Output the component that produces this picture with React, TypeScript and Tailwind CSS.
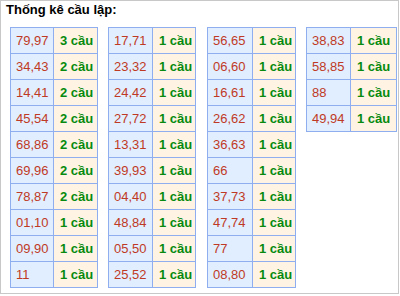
import React from "react";

type Tbl = { c1: string; c2: string; ml: string; rows: [string, string][] };

const one = (nums: string[]): [string, string][] => nums.map((n) => [n, "1 cầu"]);

const tables: Tbl[] = [
  {
    c1: "w-[43px]",
    c2: "w-[44px]",
    ml: "ml-[9px]",
    rows: [
      ["79,97", "3 cầu"],
      ["34,43", "2 cầu"],
      ["14,41", "2 cầu"],
      ["45,54", "2 cầu"],
      ["68,86", "2 cầu"],
      ["69,96", "2 cầu"],
      ["78,87", "2 cầu"],
      ["01,10", "1 cầu"],
      ["09,90", "1 cầu"],
      ["11", "1 cầu"],
    ],
  },
  {
    c1: "w-[44px]",
    c2: "w-[43px]",
    ml: "ml-[10px]",
    rows: one(["17,71", "23,32", "24,42", "27,72", "13,31", "39,93", "04,40", "48,84", "05,50", "25,52"]),
  },
  {
    c1: "w-[45px]",
    c2: "w-[43px]",
    ml: "ml-[11px]",
    rows: one(["56,65", "06,60", "16,61", "26,62", "36,63", "66", "37,73", "47,74", "77", "08,80"]),
  },
  {
    c1: "w-[44px]",
    c2: "w-[46px]",
    ml: "ml-[10px]",
    rows: one(["38,83", "58,85", "88", "49,94"]),
  },
];

export default function App() {
  return (
    <div className="w-[399px] h-[294px] border border-[#c8c8c8] bg-white font-['Liberation_Sans',Arial,sans-serif]">
      <div className="pt-[1px] pl-[5px] text-[13px] leading-[16px] font-bold text-black">
        Thống kê cầu lập:
      </div>
      <div className="flex items-start mt-[9px]">
        {tables.map((t, ti) => (
          <div key={ti} className={`flex flex-col border-l border-t border-[#8eaef0] ${t.ml}`}>
            {t.rows.map(([n, c], ri) => (
              <div key={ri} className="flex h-[26px]">
                <div
                  className={`flex items-center h-full border-r border-b border-[#8eaef0] bg-[#e1eeff] pl-[5px] text-[13px] text-[#bf3a25] ${t.c1}`}
                >
                  {n}
                </div>
                <div
                  className={`flex items-center h-full border-r border-b border-[#8eaef0] bg-[#fff4e3] pl-[6px] text-[13px] font-bold text-[#078a0f] ${t.c2}`}
                >
                  {c}
                </div>
              </div>
            ))}
          </div>
        ))}
      </div>
    </div>
  );
}
